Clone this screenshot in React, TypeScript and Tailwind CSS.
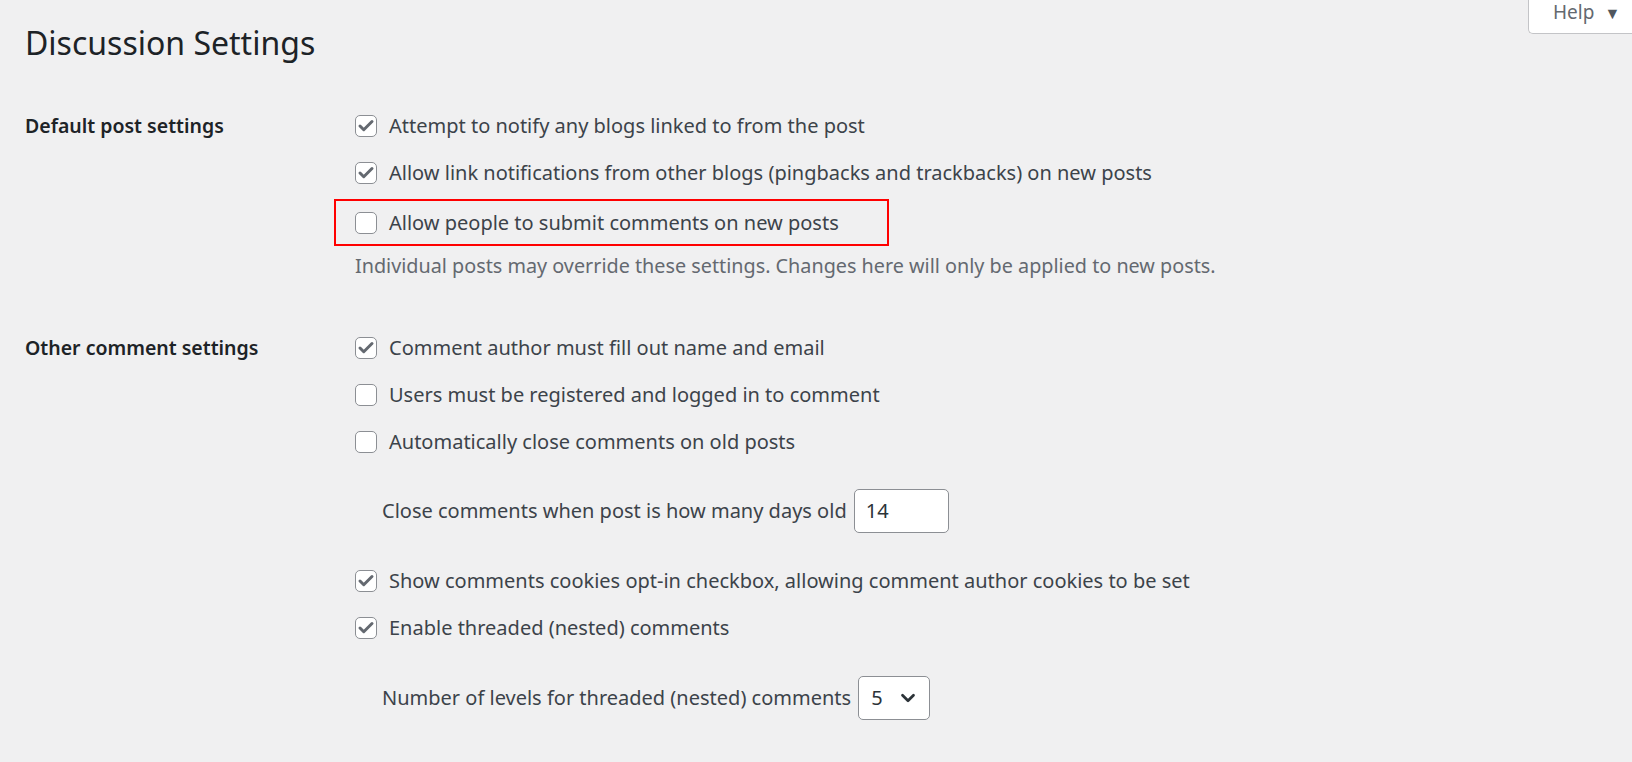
import { Check, ChevronDown } from 'lucide-react';

const font = { fontFamily: '"Segoe UI", "Noto Sans", "Open Sans", sans-serif' };

function Box({ checked }: { checked?: boolean }) {
  return (
    <span className="w-[22px] h-[22px] shrink-0 rounded-[5px] border border-[#8c8f94] bg-white flex items-center justify-center mr-3">
      {checked && <Check className="w-[18px] h-[18px] text-[#646970]" strokeWidth={4} />}
    </span>
  );
}

function Row({ checked, label }: { checked?: boolean; label: string }) {
  return (
    <div className="h-[47px] flex items-center">
      <Box checked={checked} />
      <span>{label}</span>
    </div>
  );
}

export default function App() {
  return (
    <div className="min-h-screen bg-[#f0f0f1] text-[#3c434a] text-[20px] relative" style={font}>
      {/* Help tab */}
      <div className="absolute top-0 right-0 w-[104px] h-[34px] bg-white border border-t-0 border-r-0 border-[#c3c4c7] rounded-bl-[5px] flex items-center pl-[24px] gap-[10px] text-[#646970] text-[19px]">
        <span className="-mt-[8px]">Help</span>
        <span className="text-[16px] -mt-[8px] text-[#50575e]">▼</span>
      </div>

      <div className="pl-[25px] pt-[16px]">
        <h1 className="text-[32px] leading-[54px] text-[#1d2327] font-normal">Discussion Settings</h1>

        <div className="mt-[32px] flex">
          <div className="w-[330px] h-[47px] flex items-center font-semibold text-[19.5px] text-[#1d2327]">Default post settings</div>
          <div className="flex flex-col">
            <Row checked label="Attempt to notify any blogs linked to from the post" />
            <Row checked label="Allow link notifications from other blogs (pingbacks and trackbacks) on new posts" />
            <div className="h-[47px] mt-[3px] flex items-center -ml-[21px] pl-[19px] w-[555px] border-2 border-[#ff0000]">
              <Box />
              <span>Allow people to submit comments on new posts</span>
            </div>
            <p className="mt-[6px] leading-[28px] text-[#646970] text-[19.8px]">Individual posts may override these settings. Changes here will only be applied to new posts.</p>
          </div>
        </div>

        <div className="mt-[44px] flex">
          <div className="w-[330px] h-[47px] flex items-center font-semibold text-[19.5px] text-[#1d2327]">Other comment settings</div>
          <div className="flex flex-col">
            <Row checked label="Comment author must fill out name and email" />
            <Row label="Users must be registered and logged in to comment" />
            <Row label="Automatically close comments on old posts" />
            <div className="h-[92px] flex items-center pl-[27px]">
              <span className="mr-[7px]">Close comments when post is how many days old</span>
              <div className="w-[95px] h-[44px] bg-white border border-[#8c8f94] rounded-[5px] flex items-center pl-[11px] text-[#2c3338]">14</div>
            </div>
            <Row checked label="Show comments cookies opt-in checkbox, allowing comment author cookies to be set" />
            <Row checked label="Enable threaded (nested) comments" />
            <div className="h-[94px] flex items-center pl-[27px]">
              <span className="mr-[7px]">Number of levels for threaded (nested) comments</span>
              <div className="w-[72px] h-[44px] bg-white border border-[#8c8f94] rounded-[5px] flex items-center pl-[12px] pr-[10px] justify-between text-[#2c3338]">
                <span>5</span>
                <ChevronDown className="w-[22px] h-[22px] text-[#2c3338]" strokeWidth={3} />
              </div>
            </div>
          </div>
        </div>
      </div>
    </div>
  );
}
